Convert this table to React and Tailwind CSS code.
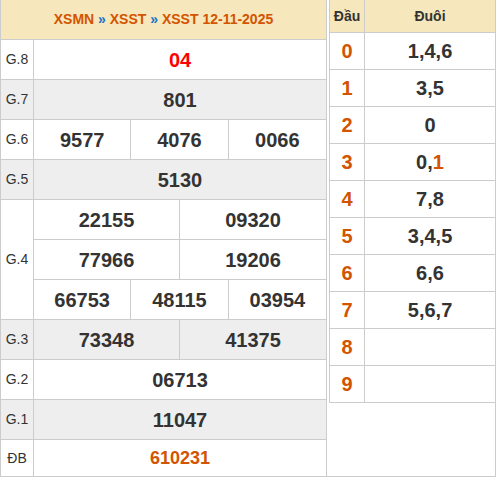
const rows = [
  { label: 'G.8', cells: [['04']], bg: 'bg-white', tone: 'text-[#ff0000]' },
  { label: 'G.7', cells: [['801']], bg: 'bg-[#eeeeee]' },
  { label: 'G.6', cells: [['9577', '4076', '0066']], bg: 'bg-white' },
  { label: 'G.5', cells: [['5130']], bg: 'bg-[#eeeeee]' },
  {
    label: 'G.4',
    cells: [
      ['22155', '09320'],
      ['77966', '19206'],
      ['66753', '48115', '03954'],
    ],
    bg: 'bg-white',
  },
  { label: 'G.3', cells: [['73348', '41375']], bg: 'bg-[#eeeeee]' },
  { label: 'G.2', cells: [['06713']], bg: 'bg-white' },
  { label: 'G.1', cells: [['11047']], bg: 'bg-[#eeeeee]' },
]

const loto = [
  ['1', '4', '6'],
  ['3', '5'],
  ['0'],
  ['0', '1'],
  ['7', '8'],
  ['3', '4', '5'],
  ['6', '6'],
  ['5', '6', '7'],
  [],
  [],
]

const gridCols = { 1: 'grid-cols-1', 2: 'grid-cols-2', 3: 'grid-cols-3' }

const PrizeLine = ({ nums, tone, last }) => (
  <div className={`grid ${gridCols[nums.length]} ${last ? 'h-[39px]' : 'h-[40px] border-b border-[#cccccc]'}`}>
    {nums.map((n, i) => (
      <div
        key={i}
        className={`flex items-center justify-center text-[20px] font-bold ${tone || 'text-[#333333]'} ${
          i < nums.length - 1 ? 'border-r border-[#cccccc]' : ''
        }`}
      >
        {n}
      </div>
    ))}
  </div>
)

export default function App() {
  return (
    <div className="flex w-[496px] h-[477px] bg-white font-['Liberation_Sans',Arial,sans-serif]">
      {/* ket qua */}
      <div className="flex flex-col w-[327px] h-[477px] border-l border-r border-b border-[#cccccc]">
        <div className="flex items-center justify-center h-[40px] shrink-0 bg-[#f6e7bd] border-b border-[#cccccc] text-[14px] font-bold text-[#d35400] whitespace-pre">
          XSMN <span className="text-[#1a73c9]">»</span> XSST <span className="text-[#1a73c9]">»</span> XSST 12-11-2025
        </div>
        {rows.map((r) => (
          <div key={r.label} className={`flex ${r.bg} border-b border-[#cccccc]`}>
            <div className="flex items-center justify-center w-[33px] shrink-0 border-r border-[#cccccc] text-[14px] text-[#333333]">
              {r.label}
            </div>
            <div className="flex-1">
              {r.cells.map((nums, i) => (
                <PrizeLine key={i} nums={nums} tone={r.tone} last={i === r.cells.length - 1} />
              ))}
            </div>
          </div>
        ))}
        <div className="flex flex-1 bg-white">
          <div className="flex items-center justify-center w-[33px] shrink-0 border-r border-[#cccccc] text-[14px] text-[#333333]">
            ĐB
          </div>
          <div className="flex flex-1 items-center justify-center text-[18px] font-bold text-[#d35400]">610231</div>
        </div>
      </div>

      {/* loto */}
      <div className="w-[169px] h-[477px] pl-[2px] border-r border-b border-[#cccccc]">
        <div className="border-l border-b border-[#cccccc]">
          <div className="flex h-[33px] bg-[#f6e7bd] border-b border-[#cccccc] text-[14px] font-bold text-[#333333]">
            <div className="flex items-center justify-center w-[35px] border-r border-[#cccccc]">Đầu</div>
            <div className="flex flex-1 items-center justify-center">Đuôi</div>
          </div>
          {loto.map((tails, d) => (
            <div key={d} className={`flex ${d < 9 ? 'h-[37px] border-b border-[#cccccc]' : 'h-[36px]'}`}>
              <div className="flex items-center justify-center w-[35px] border-r border-[#cccccc] text-[20px] font-bold text-[#d35400]">
                {d}
              </div>
              <div className="flex flex-1 items-center justify-center text-[20px] font-bold text-[#333333]">
                {tails.map((t, i) => (
                  <span key={i}>
                    {i > 0 && ','}
                    <span className={d === 3 && t === '1' ? 'text-[#d35400]' : ''}>{t}</span>
                  </span>
                ))}
              </div>
            </div>
          ))}
        </div>
      </div>
    </div>
  )
}
